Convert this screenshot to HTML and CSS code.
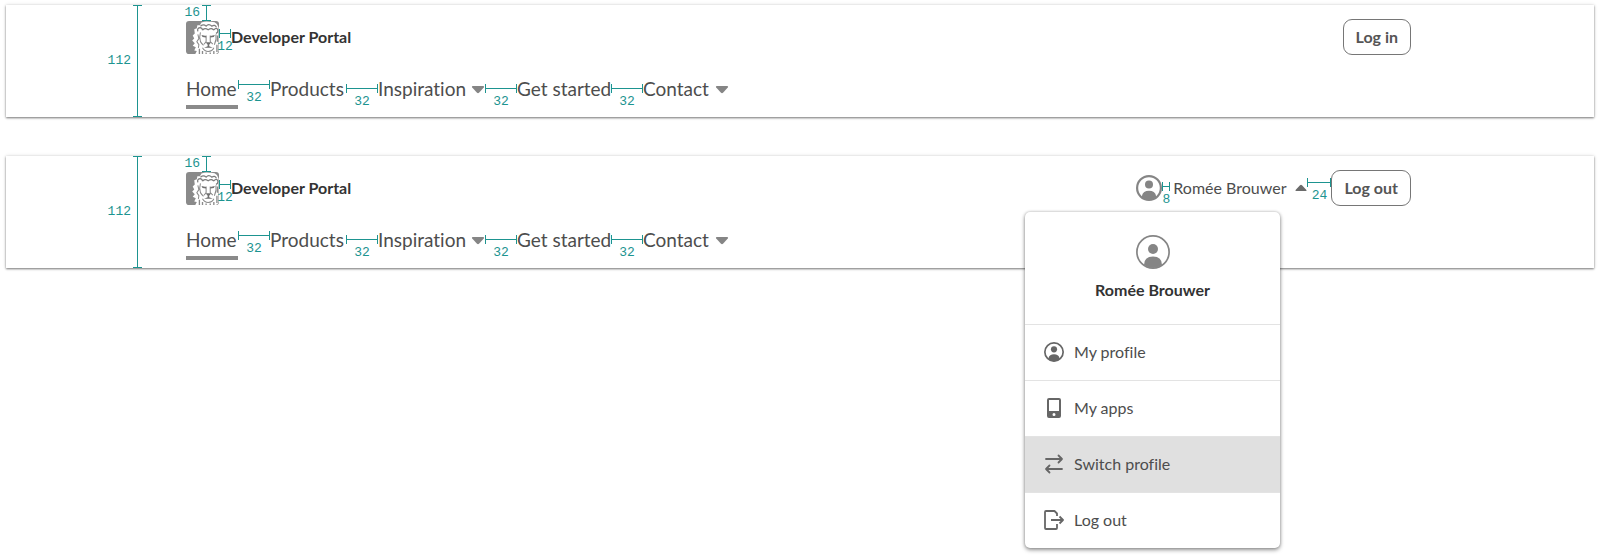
FILE: index.html
```html
<!DOCTYPE html>
<html lang="en">
<head>
<meta charset="utf-8">
<title>Developer Portal</title>
<link rel="stylesheet" href="styles.css">
</head>
<body>
<svg class="sprite" aria-hidden="true">
  <symbol id="lion" viewBox="0 0 32 32">
    <rect width="32" height="32" rx="3" fill="#8a8a8a"/>
    <path d="M15 1.500Q19-.3 23 .8Q28 .3 30 3L31.500 6V29Q31 31.500 29 32H9L10.500 29L8 28.500L9.500 25.500L6.500 24L8.500 21.500L6 19L8 17L6.500 14L8.500 12L8 8L10.500 7L11 4L13.500 4Z" fill="#fff"/>
    <path d="M11.500 10Q10.500 6.500 14 6.500Q16 7 16 9M27 8.500Q30 5.500 31 9Q31 11.500 29 12M14 5Q17 2.500 19.500 5Q22 2 25 5Q28 3 29.500 6M16 9Q18 6 21.500 8.500Q25 6 27 9" fill="none" stroke="#7c7c7c" stroke-width="1.200"/>
    <path d="M14 11Q12.500 16 14 20Q15.500 22.500 17 23.500M29 13Q30 18 27.500 23M19.500 14V20L17.500 22.500M23.500 14V20L26 22.500M11.500 13L12.500 17L10.500 20L12.500 23L12 26M16 26Q18 29.500 21.500 29.500Q25.500 29.500 27 26" fill="none" stroke="#8a8a8a"/>
    <path d="M15 13.500L19.500 14.500V16L16 15.500ZM28 13.500L23.500 14.500V16L27 15.500ZM19 20.500H24.500L22.500 23V24.500L26 26H17.500L21 24.500V23Z" fill="#6f6f6f"/>
    <path d="M13 27V32M16 29V32M19.500 30.500V32M23.500 30.500V32M27 29V32M30 23V30M30.500 14V20" stroke="#8a8a8a" stroke-width="1.300"/>
  </symbol>
  <symbol id="person" viewBox="0 0 26 26">
    <circle cx="13" cy="13" r="11.900" fill="#fff" stroke="currentColor" stroke-width="2.200"/>
    <circle cx="13" cy="9.500" r="4" fill="currentColor"/>
    <path d="M6 23V20.500Q7 15.800 13 15.800T20 20.500V23Q13 27 6 23Z" fill="currentColor"/>
  </symbol>
  <symbol id="person-large" viewBox="0 0 34 34">
    <circle cx="17" cy="17" r="16.100" fill="#fff" stroke="currentColor" stroke-width="1.700"/>
    <circle cx="17" cy="14" r="5" fill="currentColor"/>
    <path d="M8 30Q8 21.500 17 21.500T26 30Q17 36 8 30Z" fill="currentColor"/>
  </symbol>
  <symbol id="down" viewBox="0 0 14 9"><path d="M1.500 1H12.500Q13.600 1.500 12.800 2.500L8 7.800Q7 8.600 6 7.800L1.200 2.500Q.4 1.500 1.500 1Z" fill="currentColor"/></symbol>
  <symbol id="up" viewBox="0 0 12 8"><path d="M.8 7H11.200Q12 6.500 11.200 5.700L7 1.200Q6 .5 5 1.200L.8 5.700Q0 6.500.8 7Z" fill="currentColor"/></symbol>
</svg>

<header class="card">
  <span class="spec spec-height">112</span>
  <span class="spec spec-top">16</span>
  <div class="top">
    <a class="brand" href="#"><svg class="logo" aria-hidden="true"><use href="#lion"/></svg><span class="measure gap-12">12</span><strong>Developer Portal</strong></a>
    <button class="outline" type="button">Log in</button>
  </div>
  <nav class="nav">
    <a class="item home" href="#">Home</a><span class="measure gap-32 raised">32</span>
    <a class="item products" href="#">Products</a><span class="measure gap-32">32</span>
    <button class="item inspiration" type="button">Inspiration<svg class="down" aria-hidden="true"><use href="#down"/></svg></button><span class="measure gap-32">32</span>
    <a class="item started" href="#">Get started</a><span class="measure gap-32">32</span>
    <button class="item contact" type="button">Contact<svg class="down" aria-hidden="true"><use href="#down"/></svg></button>
  </nav>
</header>

<header class="card">
  <span class="spec spec-height">112</span>
  <span class="spec spec-top">16</span>
  <div class="top">
    <a class="brand" href="#"><svg class="logo" aria-hidden="true"><use href="#lion"/></svg><span class="measure gap-12">12</span><strong>Developer Portal</strong></a>
    <div class="account">
      <button class="user" type="button" aria-expanded="true"><svg class="avatar" aria-hidden="true"><use href="#person"/></svg><span class="measure gap-8">8</span><span class="user-name">Romée Brouwer</span><svg class="up" aria-hidden="true"><use href="#up"/></svg></button>
      <span class="measure gap-24">24</span>
      <button class="outline" type="button">Log out</button>
      <div class="menu">
        <div class="profile">
          <svg class="avatar-large" aria-hidden="true"><use href="#person-large"/></svg>
          <strong>Romée Brouwer</strong>
        </div>
        <a class="row" href="#"><svg class="icon" viewBox="0 0 26 26" aria-hidden="true"><use href="#person"/></svg>My profile</a>
        <a class="row" href="#"><svg class="icon" viewBox="0 0 20 20" aria-hidden="true"><path fill="currentColor" fill-rule="evenodd" d="M5 0H15Q17 0 17 2V18Q17 20 15 20H5Q3 20 3 18V2Q3 0 5 0ZM5 2V13H15V2ZM10 15A1.500 1.500 0 1 0 10 18A1.500 1.500 0 1 0 10 15Z"/></svg>My apps</a>
        <a class="row active" href="#"><svg class="icon" viewBox="0 0 20 20" aria-hidden="true"><path fill="none" stroke="currentColor" stroke-width="1.800" stroke-linecap="round" stroke-linejoin="round" d="M2 5H18M14.500 1.500L18 5L14.500 8.500M18 15H2M5.500 11.500L2 15L5.500 18.500"/></svg>Switch profile</a>
        <a class="row" href="#"><svg class="icon" viewBox="0 0 20 20" aria-hidden="true"><path fill="none" stroke="currentColor" stroke-width="1.800" stroke-linejoin="round" d="M13 6V3.500L10.500 1H2Q1 1 1 2V18Q1 19 2 19H12Q13 19 13 18V14M7 10H19M15.500 6.500L19 10L15.500 13.500"/></svg>Log out</a>
      </div>
    </div>
  </div>
  <nav class="nav">
    <a class="item home" href="#">Home</a><span class="measure gap-32 raised">32</span>
    <a class="item products" href="#">Products</a><span class="measure gap-32">32</span>
    <button class="item inspiration" type="button">Inspiration<svg class="down" aria-hidden="true"><use href="#down"/></svg></button><span class="measure gap-32">32</span>
    <a class="item started" href="#">Get started</a><span class="measure gap-32">32</span>
    <button class="item contact" type="button">Contact<svg class="down" aria-hidden="true"><use href="#down"/></svg></button>
  </nav>
</header>
</body>
</html>
```
FILE: styles.css
```css
* { box-sizing: border-box; }
body { margin: 0; min-height: 100vh; padding: 5px 6px; background: #fff; color: #4d4d4d; font-family: Lato, sans-serif; font-size: 16px; line-height: 20px; font-variant-ligatures: none; display: flex; flex-direction: column; gap: 39px; }
a { color: inherit; text-decoration: none; }
button { font: inherit; font-variant-ligatures: none; color: inherit; background: none; border: 0; padding: 0; }
svg { display: block; flex: none; }
.sprite { position: absolute; width: 0; height: 0; }

.card { position: relative; min-height: 112px; padding: 14px 183px 0 180px; background: #fff; box-shadow: 0 1px 2px rgba(0,0,0,.5), 0 0 4px rgba(0,0,0,.12); }
.top { display: flex; align-items: center; justify-content: space-between; height: 36px; }
.brand { display: flex; align-items: center; color: #333; }
.logo { width: 33px; height: 33px; }
.outline { height: 36px; padding: 0 12px; border: 1px solid #767676; border-radius: 9px; font-weight: 700; color: #555; background: #fff; white-space: nowrap; }

.nav { display: flex; align-items: flex-start; margin-top: 18px; font-size: 19px; line-height: 32px; }
.item { display: flex; align-items: center; justify-content: space-between; height: 36px; padding-bottom: 4px; white-space: nowrap; }
.home { width: 52px; padding-bottom: 0; border-bottom: 4px solid #8a8a8a; }
.products { width: 76px; }
.inspiration { width: 107px; }
.started { width: 94px; }
.contact { width: 86px; }
.down { width: 14px; height: 9px; color: #858585; }

.measure, .spec { color: #1d9490; font: 400 13px/14px "Liberation Mono", monospace; }
.measure { position: relative; display: flex; flex: none; justify-content: center; padding-top: 11px; z-index: 1; }
.measure::before { content: ""; position: absolute; left: 0; right: 0; top: 0; height: 9px; border: solid #1d9490; border-width: 0 1px; background: linear-gradient(#1d9490, #1d9490) center / 100% 1px no-repeat; }
.gap-32 { width: 32px; margin-top: 11px; }
.raised { margin-top: 7px; }
.gap-12 { width: 12px; margin-top: 8px; }
.gap-8 { width: 8px; margin-top: 12px; }
.gap-24 { width: 24px; margin-top: 4px; }

.spec { position: absolute; top: 0; display: flex; align-items: center; justify-content: flex-end; }
.spec::after { content: ""; position: absolute; right: 0; top: 0; bottom: 0; width: 9px; border: solid #1d9490; border-width: 1px 0; background: linear-gradient(#1d9490, #1d9490) center / 1px 100% no-repeat; }
.spec-height { left: 100px; width: 36px; height: 112px; padding-right: 11px; }
.spec-top { left: 175px; width: 30px; height: 16px; padding-right: 11px; }

.account { position: relative; display: flex; align-items: center; }
.user { display: flex; align-items: center; }
.avatar { width: 26px; height: 26px; color: #858585; }
.user-name { margin-left: 3px; }
.up { width: 12px; height: 8px; margin-left: 9px; color: #6b6b6b; }

.menu { position: absolute; z-index: 2; top: 42px; right: 131px; width: 255px; background: #fff; border-radius: 5px; overflow: hidden; box-shadow: 0 2px 4px rgba(0,0,0,.4), 0 0 3px rgba(0,0,0,.25); }
.profile { display: flex; flex-direction: column; align-items: center; gap: 11px; padding: 23px 0 24px; color: #333; }
.avatar-large { width: 34px; height: 34px; color: #858585; }
.row { display: flex; align-items: center; gap: 10px; height: 56px; padding: 0 19px; border-top: 1px solid #e3e3e3; }
.icon { width: 20px; height: 20px; color: #666; }
.active { background: #e0e0e0; }
```
